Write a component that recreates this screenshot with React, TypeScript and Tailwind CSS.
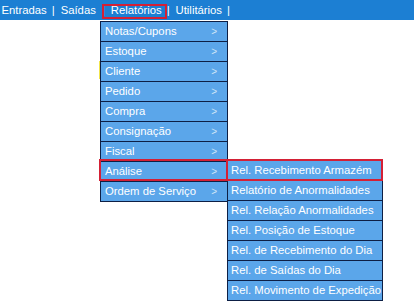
import React from "react";

const mainItems = [
  "Notas/Cupons",
  "Estoque",
  "Cliente",
  "Pedido",
  "Compra",
  "Consignação",
  "Fiscal",
  "Análise",
  "Ordem de Serviço",
];

const subItems = [
  "Rel. Recebimento Armazém",
  "Relatório de Anormalidades",
  "Rel. Relação Anormalidades",
  "Rel. Posição de Estoque",
  "Rel. de Recebimento do Dia",
  "Rel. de Saídas do Dia",
  "Rel. Movimento de Expedição",
];

export default function App() {
  return (
    <div className="relative w-[414px] h-[301px] bg-white overflow-hidden font-['Liberation_Sans',Arial,sans-serif] text-[11.3px]">
      <div className="h-[20px] bg-[#1c7fd3] flex items-center text-white pl-[1.5px] pt-[1px] whitespace-pre">
        <span>Entradas</span>
        <span className="ml-[5px] mr-[6px]">|</span>
        <span>Saídas</span>
        <span className="ml-[6px] mr-[6px]">|</span>
        <span>Relatórios</span>
        <span className="ml-[5px] mr-[6px]">|</span>
        <span>Utilitários</span>
        <span className="ml-[5px]">|</span>
      </div>
      {/* red highlight on Relatórios */}
      <div className="absolute left-[102px] top-[4px] w-[65px] h-[15px] border-2 border-[#d42035]" />

      {/* yellow sliver behind menu */}
      <div className="absolute left-[99px] top-[61px] w-[2px] h-[18px] bg-[#f2e44a]" />

      {/* main dropdown */}
      <div className="absolute left-[100px] top-[21px] w-[128px] border border-[#0d1f45] bg-[#0d1f45] flex flex-col gap-px">
        {mainItems.map((t) => (
          <div
            key={t}
            className="h-[19px] bg-[#5ba6ea] text-white flex items-center justify-between pl-[4px] pr-[10px]"
          >
            <span>{t}</span>
            <span className="text-[#cfe4f7] text-[10px]">&gt;</span>
          </div>
        ))}
      </div>
      {/* red highlight on Análise */}
      <div className="absolute left-[99px] top-[159px] w-[129px] h-[22px] border-2 border-[#d42035]" />

      {/* submenu */}
      <div className="absolute left-[227px] top-[160px] w-[156px] border border-[#0d1f45] bg-[#0d1f45] flex flex-col gap-px">
        {subItems.map((t) => (
          <div key={t} className="h-[19px] bg-[#5ba6ea] text-white flex items-center pl-[3px]">
            <span>{t}</span>
          </div>
        ))}
      </div>
      {/* red highlight on first submenu item */}
      <div className="absolute left-[226px] top-[159px] w-[157px] h-[22px] border-2 border-[#d42035]" />
    </div>
  );
}
